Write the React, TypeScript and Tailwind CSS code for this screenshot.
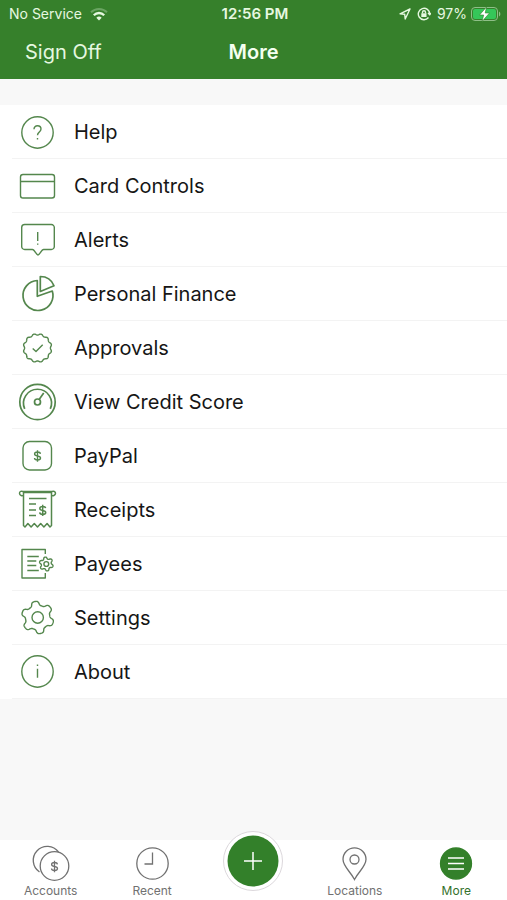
import React from "react";

// Closed outline whose radius swings between inner and outer, once per lobe.
// A higher edge value gives flatter tops and steeper sides.
function lobePath(cx: number, cy: number, lobes: number, outer: number, inner: number, edge: number, turn = 0) {
  const points: string[] = [];
  for (let deg = 0; deg < 360; deg += 2) {
    const wave = Math.cos((lobes * (deg - turn) * Math.PI) / 180);
    const r = (outer + inner) / 2 + (((outer - inner) / 2) * Math.tanh(edge * wave)) / Math.tanh(edge);
    const a = (deg * Math.PI) / 180;
    points.push(`${(cx + r * Math.cos(a)).toFixed(2)} ${(cy + r * Math.sin(a)).toFixed(2)}`);
  }
  return `M${points.join("L")}Z`;
}

function Dollar({ x, y }: { x: number; y: number }) {
  return (
    <g transform={`translate(${x} ${y})`}>
      <path d="M2.900-2.200C2.700-3.400 1.600-4 0-4s-2.900.7-2.900 2S-1.600-.3 0 0s3 .8 3 2.100S1.700 4 0 4s-2.900-.7-3-2M0-5.700V5.700" />
    </g>
  );
}

const items = [
  {
    label: "Help",
    icon: (
      <>
        <circle cx="19.500" cy="20.500" r="15.700" />
        <path d="M16 17.300c0-2.200 1.400-3.500 3.500-3.500s3.500 1.300 3.500 3.200c0 2.900-3.500 3-3.500 6.200M19.500 26v1.400" />
      </>
    ),
  },
  {
    label: "Card Controls",
    icon: (
      <>
        <rect x="2.500" y="8.500" width="34" height="23.500" rx="2.500" />
        <path d="M2.500 15.500h34" />
      </>
    ),
  },
  {
    label: "Alerts",
    icon: (
      <>
        <path d="M6.700 4.500h26.600a3 3 0 0 1 3 3v19a3 3 0 0 1-3 3H25.500c-2 0-4 5.500-5.500 5.500s-3.500-5.500-5.500-5.500H6.700a3 3 0 0 1-3-3v-19a3 3 0 0 1 3-3Z" />
        <path d="M19.700 12v9M19.700 23.500v1.300" />
      </>
    ),
  },
  {
    label: "Personal Finance",
    icon: (
      <g strokeWidth="1.700">
        <path d="M19.300 6.500A15 15 0 1 0 34.300 17L19.300 22.300Z" />
        <path d="M22.300 2.500v15L36 11.700C33.700 6 28.500 2.500 22.300 2.500Z" />
      </g>
    ),
  },
  {
    label: "Approvals",
    icon: (
      <>
        <path d={lobePath(19.5, 20, 12, 14.3, 12.9, 0.5, 15)} />
        <path d="m14.700 20.500 3.300 3 6.700-6.700" />
      </>
    ),
  },
  {
    label: "View Credit Score",
    icon: (
      <g strokeWidth="1.700">
        <circle cx="19.500" cy="20" r="17.700" />
        <path d="M6.700 26.900a14 14 0 1 1 25.600 0M21.300 17.200l4.400-6.200" />
        <circle cx="19.500" cy="20" r="3" />
      </g>
    ),
  },
  {
    label: "PayPal",
    icon: (
      <>
        <rect x="5" y="5.500" width="28.500" height="28.500" rx="6.500" />
        <Dollar x={19.5} y={20} />
      </>
    ),
  },
  {
    label: "Receipts",
    icon: (
      <g strokeWidth="1.500">
        <path d="M5.500 5.300C4.500 6.300 1.500 5.700 1.500 3.300S3.500 1.200 5 1.500h29c1.500-.3 3.500-.3 3.500 1.800s-3 3-4 2" />
        <path d="M5.500 2.500v33l1.500 1.500 2.900-3.500 3.200 3.500 3.200-3.500 3.200 3.500 3.200-3.500 3.200 3.500 3.200-3.500 2.900 3.500 1.500-1.500v-33Z" />
        <path d="M11 8.500h17.500M11 14h7M11 20h7M11 25.500h7" />
        <Dollar x={24.7} y={20.4} />
      </g>
    ),
  },
  {
    label: "Payees",
    icon: (
      <>
        <path d="M27.300 10V5.500H4v28.500h23.300v-5M9.300 12.500h11.500M9.300 17h9M9.300 21.500h9M9.300 26.500h11.500" />
        <path d={lobePath(28.3, 20, 6, 7, 5, 1.2, 20)} />
        <circle cx="28.300" cy="20" r="2.400" />
      </>
    ),
  },
  {
    label: "Settings",
    icon: (
      <>
        <path d={lobePath(19.7, 19.5, 6, 16.2, 12.2, 2, 20)} />
        <circle cx="19.700" cy="19.500" r="5.700" />
      </>
    ),
  },
  {
    label: "About",
    icon: (
      <>
        <circle cx="19.500" cy="19.500" r="15.700" />
        <path d="M19.500 16.800v9M19.500 12.500v1.500" />
      </>
    ),
  },
];

const tabs = [
  {
    label: "Accounts",
    icon: (
      <>
        <path d="M8.500 28A14 14 0 1 1 27.500 8" />
        <circle cx="23.500" cy="22" r="14.300" />
        <Dollar x={23.5} y={22.5} />
      </>
    ),
  },
  {
    label: "Recent",
    icon: (
      <>
        <circle cx="20.500" cy="19.500" r="15.700" />
        <path d="M20.500 8.500v11.500h-8" />
      </>
    ),
  },
  { label: "Add", icon: null },
  {
    label: "Locations",
    icon: (
      <>
        <path d="M19.500 35.500C15.500 27.500 8 22.500 8 15.300a11.500 11.500 0 0 1 23 0C31 22.500 23.500 27.500 19.500 35.500Z" />
        <circle cx="19.500" cy="15.500" r="4.500" />
      </>
    ),
  },
  {
    label: "More",
    icon: (
      <>
        <circle cx="20" cy="19.500" r="15.500" className="fill-[#33802a] stroke-[#33802a]" />
        <path d="M12 14h16M12 19.500h16M12 25h16" className="stroke-white" />
      </>
    ),
  },
];

function StatusBar() {
  return (
    <div className="grid grid-cols-[1fr_auto_1fr] items-center pt-1 pl-[9px] pr-[6px] text-sm leading-5 text-[#e6f8e0]">
      <div className="flex items-center gap-2">
        <span>No Service</span>
        <svg className="h-4 w-[18px]" viewBox="0 0 18 16" fill="none" stroke="currentColor" strokeWidth="2">
          <path d="M1 6.300a11.500 11.500 0 0 1 16 0" className="opacity-30" />
          <path d="M3.800 9.200a7.300 7.300 0 0 1 10.400 0" strokeWidth="2.300" />
          <path d="M6.300 11.800a4 4 0 0 1 5.400 0L9 14.500Z" fill="currentColor" stroke="none" />
        </svg>
      </div>
      <span className="text-[15px] font-semibold">12:56 PM</span>
      <div className="flex items-center justify-end gap-1">
        <svg className="mr-0.5 h-3 w-3" viewBox="0 0 12 12" fill="none" stroke="currentColor" strokeWidth="1.400" strokeLinejoin="round">
          <path d="M11 1 1 5.800l4.700.5.500 4.700Z" />
        </svg>
        <svg className="mr-0.5 h-[14px] w-[14px]" viewBox="0 0 14 14" fill="none" stroke="currentColor" strokeWidth="1.400">
          <path d="M11.500 10.500A5.700 5.700 0 1 1 12.700 7M11 6l1.700 1.700L14 6" />
          <rect x="4.300" y="6.300" width="5.200" height="3.700" fill="currentColor" stroke="none" />
          <path d="M5.500 6.500V5.300a1.500 1.500 0 0 1 3 0v1.200" />
        </svg>
        <span>97%</span>
        <svg className="h-4 w-[30px]" viewBox="0 0 30 16" fill="none">
          <rect x="0.500" y="1.500" width="26" height="13" rx="3.500" stroke="#8fbf88" />
          <rect x="2" y="3" width="23" height="10" rx="2" fill="#35c759" />
          <path d="M28 5.500c1.800.8 1.800 4.200 0 5Z" fill="#8fbf88" />
          <path d="M15.500 1 8.500 9h4.200l-1.700 6.500L18.500 7h-4.300Z" fill="#fff" stroke="#33802a" strokeWidth="0.600" />
        </svg>
      </div>
    </div>
  );
}

export default function App() {
  return (
    <div className="flex min-h-screen flex-col bg-[#f8f8f8] font-['Inter',sans-serif]">
      <header className="bg-[#36802b] pb-[11px]">
        <StatusBar />
        <div className="grid grid-cols-[1fr_auto_1fr] items-center px-[25px] pt-3">
          <button className="justify-self-start text-xl leading-8 text-[#e6f8e0]">Sign Off</button>
          <h1 className="text-xl leading-8 font-semibold text-[#f4fff0]">More</h1>
        </div>
      </header>

      <main className="pt-[26px]">
        <ul className="bg-white">
          {items.map((item) => (
            <li key={item.label} className="pl-3">
              <button className="flex h-[54px] w-full items-center gap-4 border-b border-[#f3f3f3] pl-[6px] text-left text-xl text-[#161616]">
                <svg
                  className="h-10 w-10 text-[#54874d]"
                  viewBox="0 0 40 40"
                  fill="none"
                  stroke="currentColor"
                  strokeWidth="1.400"
                  strokeLinejoin="round"
                >
                  {item.icon}
                </svg>
                {item.label}
              </button>
            </li>
          ))}
        </ul>
      </main>

      <nav className="mt-auto grid h-[60px] grid-cols-5 bg-white text-xs text-[#717171]">
        {tabs.map((tab) =>
          tab.icon ? (
            <button
              key={tab.label}
              className={
                tab.label === "More"
                  ? "flex flex-col items-center pt-1 text-[#33702b]"
                  : "flex flex-col items-center pt-1"
              }
            >
              <svg className="h-10 w-10" viewBox="0 0 40 40" fill="none" stroke="currentColor" strokeWidth="1.300">
                {tab.icon}
              </svg>
              <span className="leading-[14px]">{tab.label}</span>
            </button>
          ) : (
            <button
              key={tab.label}
              aria-label={tab.label}
              className="-mt-[9px] flex h-[60px] w-[60px] items-center justify-center justify-self-center rounded-full border border-[#dcd8dc] bg-white"
            >
              <svg className="h-[52px] w-[52px]" viewBox="0 0 52 52">
                <circle cx="26" cy="26" r="25.500" fill="#33802a" />
                <path d="M26 17v18M17 26h18" stroke="#fff" strokeWidth="1.500" />
              </svg>
            </button>
          )
        )}
      </nav>
    </div>
  );
}
